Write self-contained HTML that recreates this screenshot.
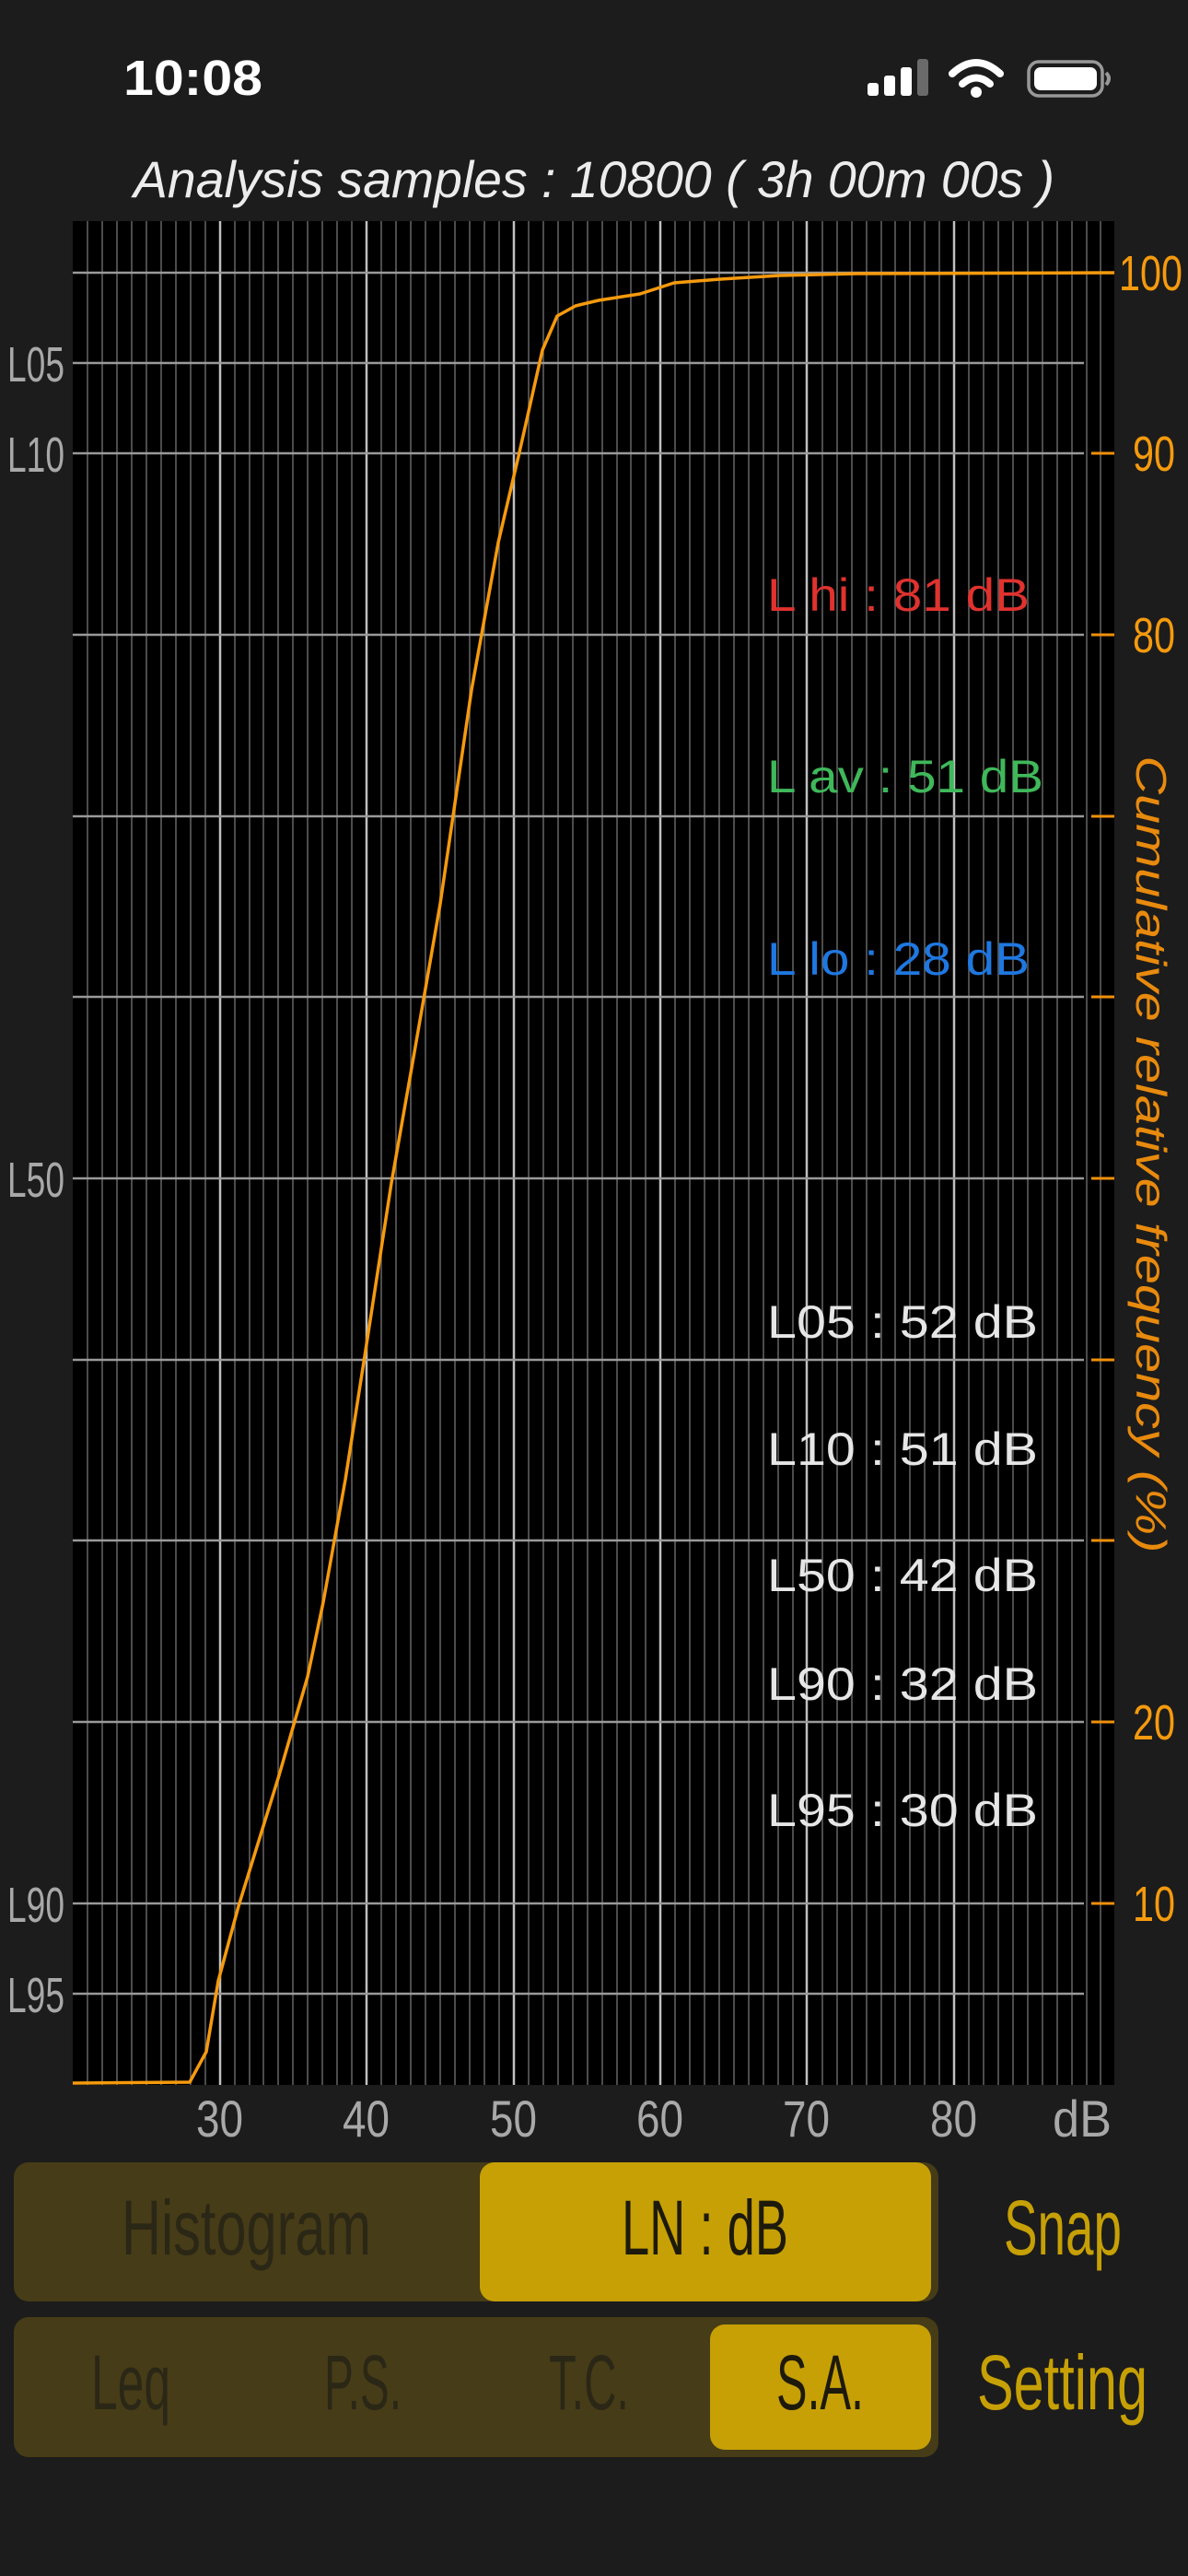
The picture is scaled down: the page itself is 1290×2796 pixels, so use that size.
<!DOCTYPE html>
<html><head><meta charset="utf-8"><style>
html,body{margin:0;padding:0;background:#1c1c1c;}
svg{display:block}
</style></head><body>
<svg width="1290" height="2796" viewBox="0 0 1290 2796" xmlns="http://www.w3.org/2000/svg">
<rect width="1290" height="2796" fill="#1c1c1c"/>
<text x="134" y="103" font-family="Liberation Sans, sans-serif" font-weight="bold" font-size="54" fill="#fff" textLength="151" lengthAdjust="spacingAndGlyphs">10:08</text>
<g fill="#fff">
<rect x="942" y="90" width="12" height="14" rx="3"/>
<rect x="960" y="82" width="12" height="22" rx="3"/>
<rect x="978" y="73" width="12" height="31" rx="3"/>
<rect x="996" y="64" width="12" height="40" rx="3" fill="#6a6a6a"/>
</g>
<g fill="none" stroke="#fff" stroke-width="8" stroke-linecap="round">
<path d="M1034 80 Q1060 56 1086 80"/>
<path d="M1045 91 Q1060 78 1075 91"/>
</g>
<circle cx="1060" cy="100" r="6" fill="#fff"/>
<rect x="1117" y="67" width="80" height="37" rx="11" fill="none" stroke="#fff" stroke-width="3.5" opacity="0.55"/>
<rect x="1123" y="73" width="68" height="25" rx="7" fill="#fff"/>
<path d="M1201 79 q6 6 0 13" stroke="#fff" stroke-width="4" fill="none" opacity="0.55"/>
<text x="645" y="214" text-anchor="middle" font-family="Liberation Sans, sans-serif" font-style="italic" font-size="56" fill="#ececec" textLength="1000" lengthAdjust="spacingAndGlyphs">Analysis samples : 10800 ( 3h 00m 00s )</text>
<rect x="79" y="240" width="1131" height="2023" fill="#000"/>
<g stroke="#666" stroke-width="1.5">
<line x1="95" y1="240" x2="95" y2="2263"/><line x1="111" y1="240" x2="111" y2="2263"/><line x1="127" y1="240" x2="127" y2="2263"/><line x1="143" y1="240" x2="143" y2="2263"/><line x1="159" y1="240" x2="159" y2="2263"/><line x1="175" y1="240" x2="175" y2="2263"/><line x1="191" y1="240" x2="191" y2="2263"/><line x1="207" y1="240" x2="207" y2="2263"/><line x1="223" y1="240" x2="223" y2="2263"/>
<line x1="255" y1="240" x2="255" y2="2263"/><line x1="271" y1="240" x2="271" y2="2263"/><line x1="286" y1="240" x2="286" y2="2263"/><line x1="302" y1="240" x2="302" y2="2263"/><line x1="318" y1="240" x2="318" y2="2263"/><line x1="334" y1="240" x2="334" y2="2263"/><line x1="350" y1="240" x2="350" y2="2263"/><line x1="366" y1="240" x2="366" y2="2263"/><line x1="382" y1="240" x2="382" y2="2263"/>
<line x1="414" y1="240" x2="414" y2="2263"/><line x1="430" y1="240" x2="430" y2="2263"/><line x1="446" y1="240" x2="446" y2="2263"/><line x1="462" y1="240" x2="462" y2="2263"/><line x1="478" y1="240" x2="478" y2="2263"/><line x1="494" y1="240" x2="494" y2="2263"/><line x1="510" y1="240" x2="510" y2="2263"/><line x1="526" y1="240" x2="526" y2="2263"/><line x1="542" y1="240" x2="542" y2="2263"/>
<line x1="574" y1="240" x2="574" y2="2263"/><line x1="590" y1="240" x2="590" y2="2263"/><line x1="606" y1="240" x2="606" y2="2263"/><line x1="622" y1="240" x2="622" y2="2263"/><line x1="638" y1="240" x2="638" y2="2263"/><line x1="654" y1="240" x2="654" y2="2263"/><line x1="670" y1="240" x2="670" y2="2263"/><line x1="685" y1="240" x2="685" y2="2263"/><line x1="701" y1="240" x2="701" y2="2263"/>
<line x1="733" y1="240" x2="733" y2="2263"/><line x1="749" y1="240" x2="749" y2="2263"/><line x1="765" y1="240" x2="765" y2="2263"/><line x1="781" y1="240" x2="781" y2="2263"/><line x1="797" y1="240" x2="797" y2="2263"/><line x1="813" y1="240" x2="813" y2="2263"/><line x1="829" y1="240" x2="829" y2="2263"/><line x1="845" y1="240" x2="845" y2="2263"/><line x1="861" y1="240" x2="861" y2="2263"/>
<line x1="893" y1="240" x2="893" y2="2263"/><line x1="909" y1="240" x2="909" y2="2263"/><line x1="925" y1="240" x2="925" y2="2263"/><line x1="941" y1="240" x2="941" y2="2263"/><line x1="957" y1="240" x2="957" y2="2263"/><line x1="972" y1="240" x2="972" y2="2263"/><line x1="988" y1="240" x2="988" y2="2263"/><line x1="1004" y1="240" x2="1004" y2="2263"/><line x1="1020" y1="240" x2="1020" y2="2263"/>
<line x1="1052" y1="240" x2="1052" y2="2263"/><line x1="1068" y1="240" x2="1068" y2="2263"/><line x1="1084" y1="240" x2="1084" y2="2263"/><line x1="1100" y1="240" x2="1100" y2="2263"/><line x1="1116" y1="240" x2="1116" y2="2263"/><line x1="1132" y1="240" x2="1132" y2="2263"/><line x1="1148" y1="240" x2="1148" y2="2263"/><line x1="1164" y1="240" x2="1164" y2="2263"/><line x1="1180" y1="240" x2="1180" y2="2263"/><line x1="1195" y1="240" x2="1195" y2="2263"/>
</g>
<g stroke="#c0c0c0" stroke-width="2.5">
<line x1="239" y1="240" x2="239" y2="2263"/><line x1="398" y1="240" x2="398" y2="2263"/><line x1="558" y1="240" x2="558" y2="2263"/><line x1="717" y1="240" x2="717" y2="2263"/><line x1="876" y1="240" x2="876" y2="2263"/><line x1="1036" y1="240" x2="1036" y2="2263"/>
</g>
<g stroke="#9a9a9a" stroke-width="2.5">
<line x1="79" y1="296" x2="1210" y2="296"/>
<line x1="79" y1="394" x2="1177" y2="394"/>
<line x1="79" y1="492" x2="1177" y2="492"/>
<line x1="79" y1="689" x2="1177" y2="689"/>
<line x1="79" y1="886" x2="1177" y2="886"/>
<line x1="79" y1="1082" x2="1177" y2="1082"/>
<line x1="79" y1="1279" x2="1177" y2="1279"/>
<line x1="79" y1="1476" x2="1177" y2="1476"/>
<line x1="79" y1="1672" x2="1177" y2="1672"/>
<line x1="79" y1="1869" x2="1177" y2="1869"/>
<line x1="79" y1="2066" x2="1177" y2="2066"/>
<line x1="79" y1="2164" x2="1177" y2="2164"/>
</g>
<g stroke="#f0900a" stroke-width="3">
<line x1="1185" y1="492" x2="1210" y2="492"/><line x1="1185" y1="689" x2="1210" y2="689"/><line x1="1185" y1="886" x2="1210" y2="886"/><line x1="1185" y1="1082" x2="1210" y2="1082"/><line x1="1185" y1="1279" x2="1210" y2="1279"/><line x1="1185" y1="1476" x2="1210" y2="1476"/><line x1="1185" y1="1672" x2="1210" y2="1672"/><line x1="1185" y1="1869" x2="1210" y2="1869"/><line x1="1185" y1="2066" x2="1210" y2="2066"/>
</g>
<polyline fill="none" stroke="#f59a0e" stroke-width="3.5" stroke-linejoin="round" points="79,2261 206,2260 224,2227 237,2150 259,2069 303,1927 334,1820 351,1739 375,1606 396,1472 425,1284 450,1142 478,981 512,749 541,589 564,491 589,380 605,343 625,332 650,326 695,319 732,307 782,303 847,299 930,297 1210,296"/>
<g font-family="Liberation Sans, sans-serif" font-size="54" fill="#a8a8a8">
<text x="8" y="414" textLength="62" lengthAdjust="spacingAndGlyphs">L05</text>
<text x="8" y="512" textLength="62" lengthAdjust="spacingAndGlyphs">L10</text>
<text x="8" y="1299" textLength="62" lengthAdjust="spacingAndGlyphs">L50</text>
<text x="8" y="2086" textLength="62" lengthAdjust="spacingAndGlyphs">L90</text>
<text x="8" y="2184" textLength="62" lengthAdjust="spacingAndGlyphs">L95</text>
</g>
<g font-family="Liberation Sans, sans-serif" font-size="54" fill="#f59a0e">
<text x="1215" y="315" textLength="69" lengthAdjust="spacingAndGlyphs">100</text>
<text x="1230" y="511" textLength="46" lengthAdjust="spacingAndGlyphs">90</text>
<text x="1230" y="708" textLength="46" lengthAdjust="spacingAndGlyphs">80</text>
<text x="1230" y="1888" textLength="46" lengthAdjust="spacingAndGlyphs">20</text>
<text x="1230" y="2085" textLength="46" lengthAdjust="spacingAndGlyphs">10</text>
</g>
<text transform="translate(1234,1253) rotate(90)" text-anchor="middle" font-family="Liberation Sans, sans-serif" font-style="italic" font-size="46" fill="#e88a0e" textLength="865" lengthAdjust="spacingAndGlyphs">Cumulative relative frequency (%)</text>
<g font-family="Liberation Sans, sans-serif" font-size="50">
<text x="833" y="663" fill="#e0322e" textLength="285" lengthAdjust="spacingAndGlyphs">L hi : 81 dB</text>
<text x="833" y="860" fill="#3fb85a" textLength="300" lengthAdjust="spacingAndGlyphs">L av : 51 dB</text>
<text x="833" y="1058" fill="#1f78e0" textLength="285" lengthAdjust="spacingAndGlyphs">L lo : 28 dB</text>
<g fill="#e6e6e6">
<text x="833" y="1452" textLength="294" lengthAdjust="spacingAndGlyphs">L05 : 52 dB</text>
<text x="833" y="1590" textLength="294" lengthAdjust="spacingAndGlyphs">L10 : 51 dB</text>
<text x="833" y="1727" textLength="294" lengthAdjust="spacingAndGlyphs">L50 : 42 dB</text>
<text x="833" y="1845" textLength="294" lengthAdjust="spacingAndGlyphs">L90 : 32 dB</text>
<text x="833" y="1982" textLength="294" lengthAdjust="spacingAndGlyphs">L95 : 30 dB</text>
</g>
</g>
<g font-family="Liberation Sans, sans-serif" font-size="56" fill="#a8a8a8">
<text x="213" y="2319" textLength="51" lengthAdjust="spacingAndGlyphs">30</text>
<text x="372" y="2319" textLength="51" lengthAdjust="spacingAndGlyphs">40</text>
<text x="532" y="2319" textLength="51" lengthAdjust="spacingAndGlyphs">50</text>
<text x="691" y="2319" textLength="51" lengthAdjust="spacingAndGlyphs">60</text>
<text x="850" y="2319" textLength="51" lengthAdjust="spacingAndGlyphs">70</text>
<text x="1010" y="2319" textLength="51" lengthAdjust="spacingAndGlyphs">80</text>
<text x="1143" y="2319" textLength="64" lengthAdjust="spacingAndGlyphs">dB</text>
</g>
<rect x="15" y="2347" width="1004" height="151" rx="16" fill="#463c17"/>
<rect x="521" y="2347" width="490" height="151" rx="16" fill="#c6a005"/>
<rect x="15" y="2515" width="1004" height="152" rx="16" fill="#463c17"/>
<rect x="771" y="2523" width="240" height="136" rx="16" fill="#c6a005"/>
<g font-family="Liberation Sans, sans-serif" font-size="84">
<text x="132" y="2447" fill="#2b2716" textLength="271" lengthAdjust="spacingAndGlyphs">Histogram</text>
<text x="675" y="2447" fill="#1d1a0c" textLength="181" lengthAdjust="spacingAndGlyphs">LN : dB</text>
<text x="1090" y="2447" fill="#c6a005" textLength="128" lengthAdjust="spacingAndGlyphs">Snap</text>
<text x="99" y="2615" fill="#2b2716" textLength="86" lengthAdjust="spacingAndGlyphs">Leq</text>
<text x="352" y="2615" fill="#2b2716" textLength="84" lengthAdjust="spacingAndGlyphs">P.S.</text>
<text x="596" y="2615" fill="#2b2716" textLength="87" lengthAdjust="spacingAndGlyphs">T.C.</text>
<text x="843" y="2615" fill="#1d1a0c" textLength="95" lengthAdjust="spacingAndGlyphs">S.A.</text>
<text x="1061" y="2615" fill="#c6a005" textLength="185" lengthAdjust="spacingAndGlyphs">Setting</text>
</g>
</svg>
</body></html>
